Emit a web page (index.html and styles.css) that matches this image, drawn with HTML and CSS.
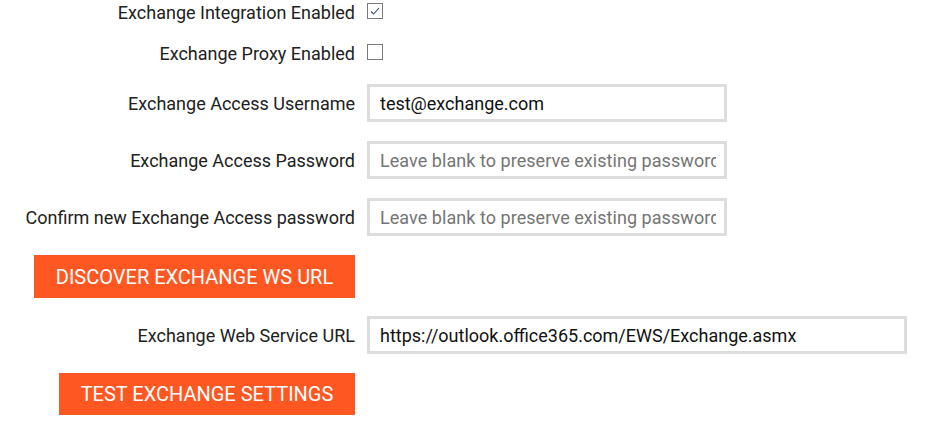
FILE: index.html
```html
<!DOCTYPE html>
<html>
<head>
<meta charset="utf-8">
<link rel="stylesheet" href="styles.css">
</head>
<body>
<form class="settings">
  <div class="row row-check first">
    <label class="label">Exchange Integration Enabled</label>
    <span class="checkbox checked"><svg viewBox="0 0 16 16" width="16" height="16"><path d="M4 8.5 L6.6 11 L12 5" fill="none" stroke="#3a4a7a" stroke-width="1.1"/></svg></span>
  </div>
  <div class="row row-check second">
    <label class="label">Exchange Proxy Enabled</label>
    <span class="checkbox"></span>
  </div>
  <div class="row row-input">
    <label class="label">Exchange Access Username</label>
    <div class="field"><span class="value">test@exchange.com</span></div>
  </div>
  <div class="row row-input">
    <label class="label">Exchange Access Password</label>
    <div class="field"><span class="placeholder">Leave blank to preserve existing password</span></div>
  </div>
  <div class="row row-input">
    <label class="label">Confirm new Exchange Access password</label>
    <div class="field"><span class="placeholder">Leave blank to preserve existing password</span></div>
  </div>
  <div class="row row-button">
    <button type="button" class="btn btn-discover">DISCOVER EXCHANGE WS URL</button>
  </div>
  <div class="row row-input">
    <label class="label">Exchange Web Service URL</label>
    <div class="field field-wide"><span class="value">https://outlook.office365.com/EWS/Exchange.asmx</span></div>
  </div>
  <div class="row row-button">
    <button type="button" class="btn btn-test">TEST EXCHANGE SETTINGS</button>
  </div>
</form>
</body>
</html>
```
FILE: styles.css
```css
html, body {
  margin: 0;
  padding: 0;
  background: #ffffff;
}
body {
  font-family: Roboto, "Liberation Sans", sans-serif;
  font-size: 18px;
  color: #212121;
}
.settings {
  display: flex;
  flex-direction: column;
}
.row {
  display: grid;
  grid-template-columns: 355px 1fr;
  column-gap: 12px;
  align-items: center;
}
.label {
  justify-self: end;
  text-align: right;
  white-space: nowrap;
}
.row-check {
  height: 24px;
}
.row-check.first {
  margin-top: 0;
  margin-bottom: 17px;
}
.row-check.second {
  margin-bottom: 19px;
}
.row-input {
  margin-bottom: 19px;
}
.row-button {
  margin-bottom: 18px;
}
.checkbox {
  box-sizing: border-box;
  width: 16px;
  height: 16px;
  border: 1px solid #7a7a7a;
  background: #fff;
  display: block;
  position: relative;
  top: -1px;
}
.checkbox svg {
  position: absolute;
  left: -1px;
  top: -1px;
}
.field {
  box-sizing: border-box;
  width: 360px;
  height: 38px;
  border: 3px solid #dddddd;
  background: #fff;
  padding: 0 8px 0 10px;
  display: flex;
  align-items: center;
  white-space: nowrap;
}
.field > span {
  flex: 1;
  min-width: 0;
  overflow: hidden;
  white-space: nowrap;
}
.field-wide {
  width: 540px;
}
.value {
  color: #111111;
}
.placeholder {
  color: #757575;
  letter-spacing: 0.05px;
}
.btn {
  grid-column: 1;
  justify-self: end;
  border: none;
  background: #ff5722;
  color: #ffffff;
  font-family: Roboto, "Liberation Sans", sans-serif;
  font-size: 20px;
  padding: 0;
  height: 43px;
  cursor: pointer;
}
.btn-discover {
  width: 321px;
}
.btn-test {
  width: 296px;
  height: 42px;
}
.row-button:last-child {
  margin-bottom: 0;
}
```
